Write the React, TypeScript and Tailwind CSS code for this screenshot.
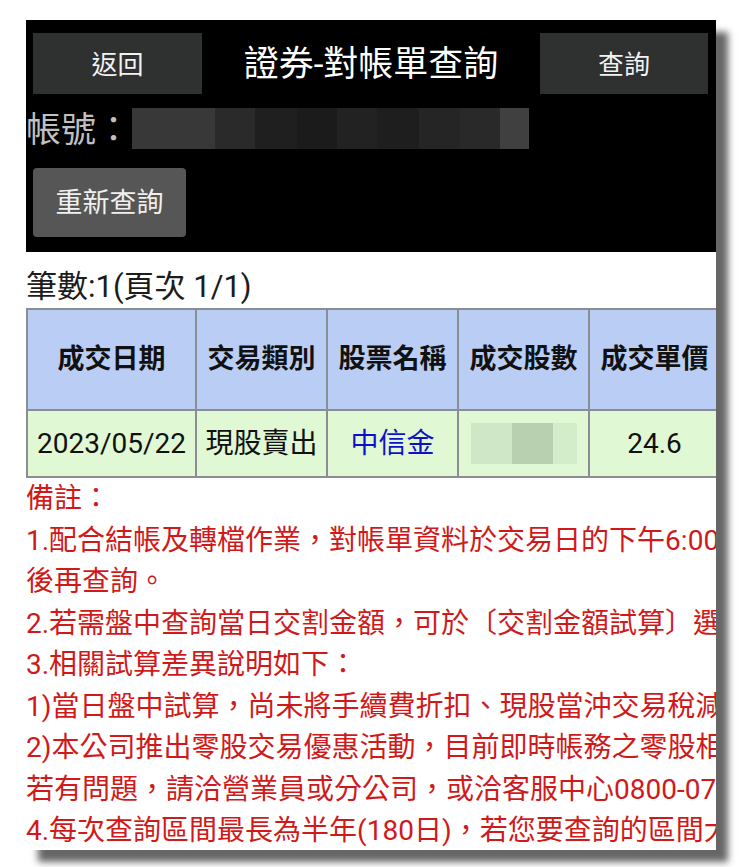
import React from "react";

const FONT = { fontFamily: 'Roboto, "Noto Sans CJK TC", "Noto Sans", sans-serif' };

const blurSegs: [number, string][] = [
  [83, "#383838"],
  [40, "#2a2a2a"],
  [42, "#1f1f1f"],
  [40, "#1b1b1b"],
  [40, "#222222"],
  [42, "#1e1e1e"],
  [41, "#252525"],
  [40, "#292929"],
  [29, "#404040"],
];

const notes = [
  "備註：",
  "1.配合結帳及轉檔作業，對帳單資料於交易日的下午6:00",
  "後再查詢。",
  "2.若需盤中查詢當日交割金額，可於〔交割金額試算〕選項查詢。",
  "3.相關試算差異說明如下：",
  "1)當日盤中試算，尚未將手續費折扣、現股當沖交易稅減半",
  "2)本公司推出零股交易優惠活動，目前即時帳務之零股相關",
  "若有問題，請洽營業員或分公司，或洽客服中心0800-07",
  "4.每次查詢區間最長為半年(180日)，若您要查詢的區間大於",
];

export default function App() {
  return (
    <div className="w-[740px] h-[867px] bg-white overflow-hidden" style={FONT}>
      <div className="ml-[26px] mt-[20px] w-[690px] h-[830px] overflow-hidden bg-white shadow-[12px_12px_7px_rgba(0,0,0,0.6)]">
        {/* black header */}
        <div className="bg-black h-[232px] pt-[13px] pl-[7px] pr-[8px]">
          <div className="flex items-center h-[61px]">
            <div className="w-[169px] h-[61px] pt-[3px] bg-[#2f3030] flex items-center justify-center text-[26px] text-[#f2f2f2]">
              返回
            </div>
            <div className="flex-1 text-center text-[35px] pt-[2px] text-white leading-none">
              證券-對帳單查詢
            </div>
            <div className="w-[168px] h-[61px] pt-[3px] bg-[#2f3030] flex items-center justify-center text-[26px] text-[#f2f2f2]">
              查詢
            </div>
          </div>
          <div className="flex items-center mt-[14px] -ml-[7px] h-[41px]">
            <span className="text-[35px] text-[#c0c0c0] leading-none w-[106px] pt-[4px] shrink-0">帳號：</span>
            <div className="flex h-[41px]">
              {blurSegs.map(([w, c], i) => (
                <div key={i} className="h-full" style={{ width: w, backgroundColor: c }} />
              ))}
            </div>
          </div>
          <div className="mt-[19px] w-[153px] h-[69px] pt-[2px] rounded-[4px] bg-[#565656] flex items-center justify-center text-[27px] text-[#f0f0f0]">
            重新查詢
          </div>
        </div>

        {/* count */}
        <div className="pt-[14px] leading-[42px] text-[31px] text-[#1c1c1c] whitespace-nowrap">
          筆數:1(頁次 1/1)
        </div>

        {/* table */}
        <table className="border-collapse table-fixed w-[693px] text-[28px]">
          <colgroup>
            <col className="w-[169px]" />
            <col className="w-[131px]" />
            <col className="w-[131px]" />
            <col className="w-[131px]" />
            <col className="w-[131px]" />
          </colgroup>
          <tbody>
            <tr className="h-[101px] bg-[#b9cdf5]">
              {["成交日期", "交易類別", "股票名稱", "成交股數", "成交單價"].map((h) => (
                <td
                  key={h}
                  className="border-2 border-[#8a8d94] text-center font-bold text-[#111] whitespace-nowrap p-0 text-[27px]"
                >
                  {h}
                </td>
              ))}
            </tr>
            <tr className="h-[67px] bg-[#e0f8d3]">
              <td className="border-2 border-[#8a8d94] text-center text-[#111] whitespace-nowrap p-0">
                2023/05/22
              </td>
              <td className="border-2 border-[#8a8d94] text-center text-[#111] whitespace-nowrap p-0">
                現股賣出
              </td>
              <td className="border-2 border-[#8a8d94] text-center text-[#1010c8] whitespace-nowrap p-0">
                中信金
              </td>
              <td className="border-2 border-[#8a8d94] p-0">
                <div className="flex justify-center">
                  <div className="flex h-[41px]">
                    <div className="w-[41px] bg-[#cfe7c6]" />
                    <div className="w-[41px] bg-[#b8cfb0]" />
                    <div className="w-[24px] bg-[#d3ecc9]" />
                  </div>
                </div>
              </td>
              <td className="border-2 border-[#8a8d94] text-center text-[#111] whitespace-nowrap p-0">
                24.6
              </td>
            </tr>
          </tbody>
        </table>

        {/* notes */}
        <div className="text-[28px] leading-[41.5px] text-[#d01a1a] whitespace-nowrap">
          {notes.map((n, i) => (
            <div key={i}>{n}</div>
          ))}
        </div>
      </div>
    </div>
  );
}
